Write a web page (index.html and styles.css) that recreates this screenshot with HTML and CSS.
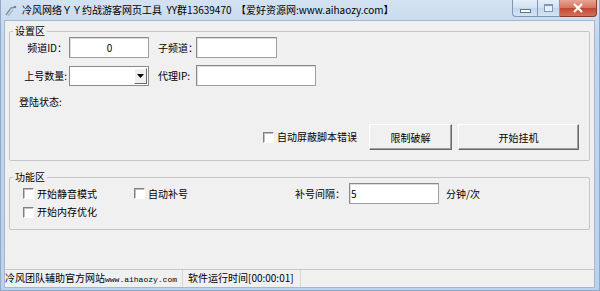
FILE: index.html
```html
<!DOCTYPE html>
<html lang="zh-CN">
<head>
  <meta charset="UTF-8" />
  <title>冷风网络ＹＹ约战游客网页工具</title>
  <link rel="stylesheet" href="styles.css">
</head>
<body>
  <div class="window">
    <!-- barra de titulo -->
    <div class="titlebar">
      <svg class="app-icon" viewBox="0 0 14 14" width="14" height="14">
        <path d="M2 11 L7 4 L12 3" stroke="#7f93aa" stroke-width="1.4" fill="none" />
        <path d="M4 12 L9 6" stroke="#a9b8c9" stroke-width="1.2" fill="none" />
        <circle cx="11" cy="3" r="1.3" fill="#6f86a3" />
      </svg>
      <span class="title">冷风网络ＹＹ约战游客网页工具&nbsp; YY群13639470 &nbsp;【爱好资源网:www.aihaozy.com】</span>
      <div class="caption-buttons">
        <div class="cap-btn cap-min"><span class="min-bar"></span></div>
        <div class="cap-btn cap-max"><span class="max-box"></span></div>
        <div class="cap-btn cap-close">
          <svg viewBox="0 0 12 10" width="12" height="10">
            <path d="M2 1 L10 9 M10 1 L2 9" stroke="#fff" stroke-width="2.2" />
          </svg>
        </div>
      </div>
    </div>

    <div class="client">
      <!-- Configuracion -->
      <fieldset class="group settings">
        <legend>设置区</legend>
        <div class="form-row">
          <span class="label">频道ID：</span>
          <div class="textbox w80 centered">0</div>
          <span class="label2">子频道：</span>
          <div class="textbox w81"></div>
        </div>
        <div class="form-row second">
          <span class="label">上号数量:</span>
          <div class="combo">
            <span class="combo-btn">
              <svg viewBox="0 0 7 4" width="7" height="4"><path d="M0 0 H7 L3.5 4 Z" fill="#000" /></svg>
            </span>
          </div>
          <span class="label2">代理IP:</span>
          <div class="textbox w120"></div>
        </div>
        <div class="login-state">登陆状态:</div>
        <div class="action-row">
          <label class="check"><span class="box"></span>自动屏蔽脚本错误</label>
          <button class="btn btn-crack">限制破解</button>
          <button class="btn btn-start">开始挂机</button>
        </div>
      </fieldset>

      <!-- Funciones -->
      <fieldset class="group functions">
        <legend>功能区</legend>
        <div class="func-row">
          <label class="check col1"><span class="box"></span>开始静音模式</label>
          <label class="check col2"><span class="box"></span>自动补号</label>
          <span class="interval-label">补号间隔：</span>
          <div class="textbox w90">5</div>
          <span class="unit">分钟/次</span>
        </div>
        <div class="func-row second">
          <label class="check col1"><span class="box"></span>开始内存优化</label>
        </div>
      </fieldset>

      <div class="spacer"></div>

      <div class="statusbar">
        <div class="panel panel-site">冷风团队辅助官方网站<span class="url">www.aihaozy.com</span></div>
        <div class="panel panel-time">软件运行时间[00:00:01]</div>
        <div class="panel panel-rest"></div>
      </div>
    </div>
  </div>
</body>
</html>
```

FILE: styles.css
```css
/* ventana estilo Windows 7 */
body {
  margin: 0;
  background: #fff;
  font-family: "Noto Sans CJK SC", "Noto Sans", sans-serif;
  font-size: 10px;
  color: #000;
}

.window {
  width: 600px;
  height: 291px;
  display: flex;
  flex-direction: column;
  background: linear-gradient(#d3e2f3, #c2d6ee 40px, #bcd1ea);
  box-sizing: border-box;
  border-left: 1px solid #8fa9c8;
  border-right: 1px solid #8fa9c8;
  border-bottom: 1px solid #8fa9c8;
}

.titlebar {
  height: 20px;
  display: flex;
  align-items: center;
  position: relative;
}

.app-icon {
  margin-left: 3px;
  margin-top: 1px;
}

.title {
  margin-left: 4px;
  line-height: 12px;
  white-space: nowrap;
  color: #000;
}

.caption-buttons {
  position: absolute;
  top: 0;
  right: 2px;
  display: flex;
  height: 18px;
}

.cap-btn {
  height: 17px;
  display: flex;
  align-items: center;
  justify-content: center;
  border: 1px solid #7f97b5;
  border-top: none;
  box-sizing: border-box;
}
.cap-min {
  width: 25px;
  border-radius: 0 0 0 4px;
  background: linear-gradient(#e5eef8, #d2e0f0 50%, #c3d5ea 51%, #d6e4f3);
  border-right: none;
}
.cap-max {
  width: 23px;
  background: linear-gradient(#e5eef8, #d2e0f0 50%, #c3d5ea 51%, #d6e4f3);
}
.cap-close {
  width: 37px;
  border-radius: 0 0 4px 0;
  border-color: #8b3a2e;
  border-left: none;
  background: linear-gradient(#e7a493, #d6735e 50%, #c4452f 51%, #d3705a);
}
.min-bar {
  display: block;
  width: 9px;
  height: 2px;
  margin-top: 5px;
  background: #fff;
  border: 1px solid #5f7592;
}
.max-box {
  display: block;
  width: 7px;
  height: 5px;
  border: 1px solid #8097b3;
  border-top-width: 2px;
  background: #e8eff8;
}

.client {
  flex: 1;
  margin: 0 4px 2px 3px;
  background: #f0f0f0;
  border: 1px solid #a3b7cf;
  display: flex;
  flex-direction: column;
}

/* cajas de grupo */
.group {
  margin: 0;
  padding: 0;
  border: 1px solid #c5c5c5;
  border-radius: 2px;
  box-sizing: border-box;
  width: 581px;
  margin-left: 4px;
}
.group legend {
  font-size: 10px;
  line-height: 12px;
  padding: 0 2px;
  margin-left: 3px;
}
.settings {
  margin-top: 4px;
  height: 136px;
}
.functions {
  margin-top: 10px;
  height: 59px;
}

.form-row {
  display: flex;
  align-items: center;
  height: 21px;
}
.form-row.second {
  margin-top: 7px;
}
.label {
  width: 57px;
  text-align: right;
  white-space: nowrap;
}
.label2 {
  width: 34px;
  margin-left: 9px;
  margin-right: 4px;
  white-space: nowrap;
}

.textbox {
  height: 21px;
  box-sizing: border-box;
  background: #fff;
  border: 1px solid #a0a0a0;
  border-top-color: #8a8a8a;
  border-left-color: #8a8a8a;
  box-shadow: inset 1px 1px 0 #dcdcdc;
  line-height: 19px;
  padding-left: 1px;
}
.textbox.centered {
  text-align: center;
}
.w80 { width: 80px; margin-left: 2px; }
.w81 { width: 81px; }
.w120 { width: 120px; }
.w90 { width: 90px; }

.combo {
  width: 80px;
  height: 20px;
  margin-left: 2px;
  box-sizing: border-box;
  background: #fff;
  border: 1px solid #8a8a8a;
  display: flex;
  justify-content: flex-end;
  padding: 1px;
}
.combo-btn {
  width: 13px;
  background: #f0f0f0;
  border: 1px solid;
  border-color: #fff #696969 #696969 #fff;
  box-sizing: border-box;
  display: flex;
  align-items: center;
  justify-content: center;
}

.login-state {
  margin-top: 10px;
  margin-left: 9px;
  line-height: 12px;
}

.action-row {
  display: flex;
  justify-content: flex-end;
  align-items: center;
  margin-top: 16px;
  padding-right: 10px;
}

.check {
  display: flex;
  align-items: center;
  white-space: nowrap;
  line-height: 12px;
}
.box {
  width: 11px;
  height: 11px;
  box-sizing: border-box;
  background: #fff;
  border: 1px solid;
  border-color: #808080 #fff #fff #808080;
  box-shadow: inset 1px 1px 0 #c0c0c0;
  margin-right: 3px;
}

.btn {
  font-family: inherit;
  font-size: 10px;
  height: 26px;
  padding: 0;
  background: #f0f0f0;
  border: 1px solid;
  border-color: #fff #696969 #696969 #fff;
  box-shadow: inset -1px -1px 0 #a0a0a0;
  color: #000;
}
.btn-crack {
  width: 83px;
  margin-left: 12px;
}
.btn-start {
  width: 121px;
  margin-left: 6px;
}

.func-row {
  display: flex;
  align-items: center;
  height: 21px;
  padding-left: 13px;
}
.func-row.second {
  height: 12px;
  margin-top: 2px;
}
.col1 { width: 111px; }
.col2 { width: 161px; }
.interval-label {
  white-space: nowrap;
  width: 54px;
}
.unit {
  margin-left: 7px;
}

.spacer {
  flex: 1;
}

.statusbar {
  height: 17px;
  display: flex;
  border-top: 1px solid #c8c8c8;
  gap: 2px;
}
.panel {
  border-right: 1px solid #d8d8d8;
  line-height: 16px;
  white-space: nowrap;
}
.panel-site {
  width: 177px;
}
.url {
  font-family: "Liberation Mono", monospace;
  font-size: 8px;
}
.panel-time {
  width: 112px;
  padding-left: 3px;
}
.panel-rest {
  flex: 1;
  border-right: none;
}
```
